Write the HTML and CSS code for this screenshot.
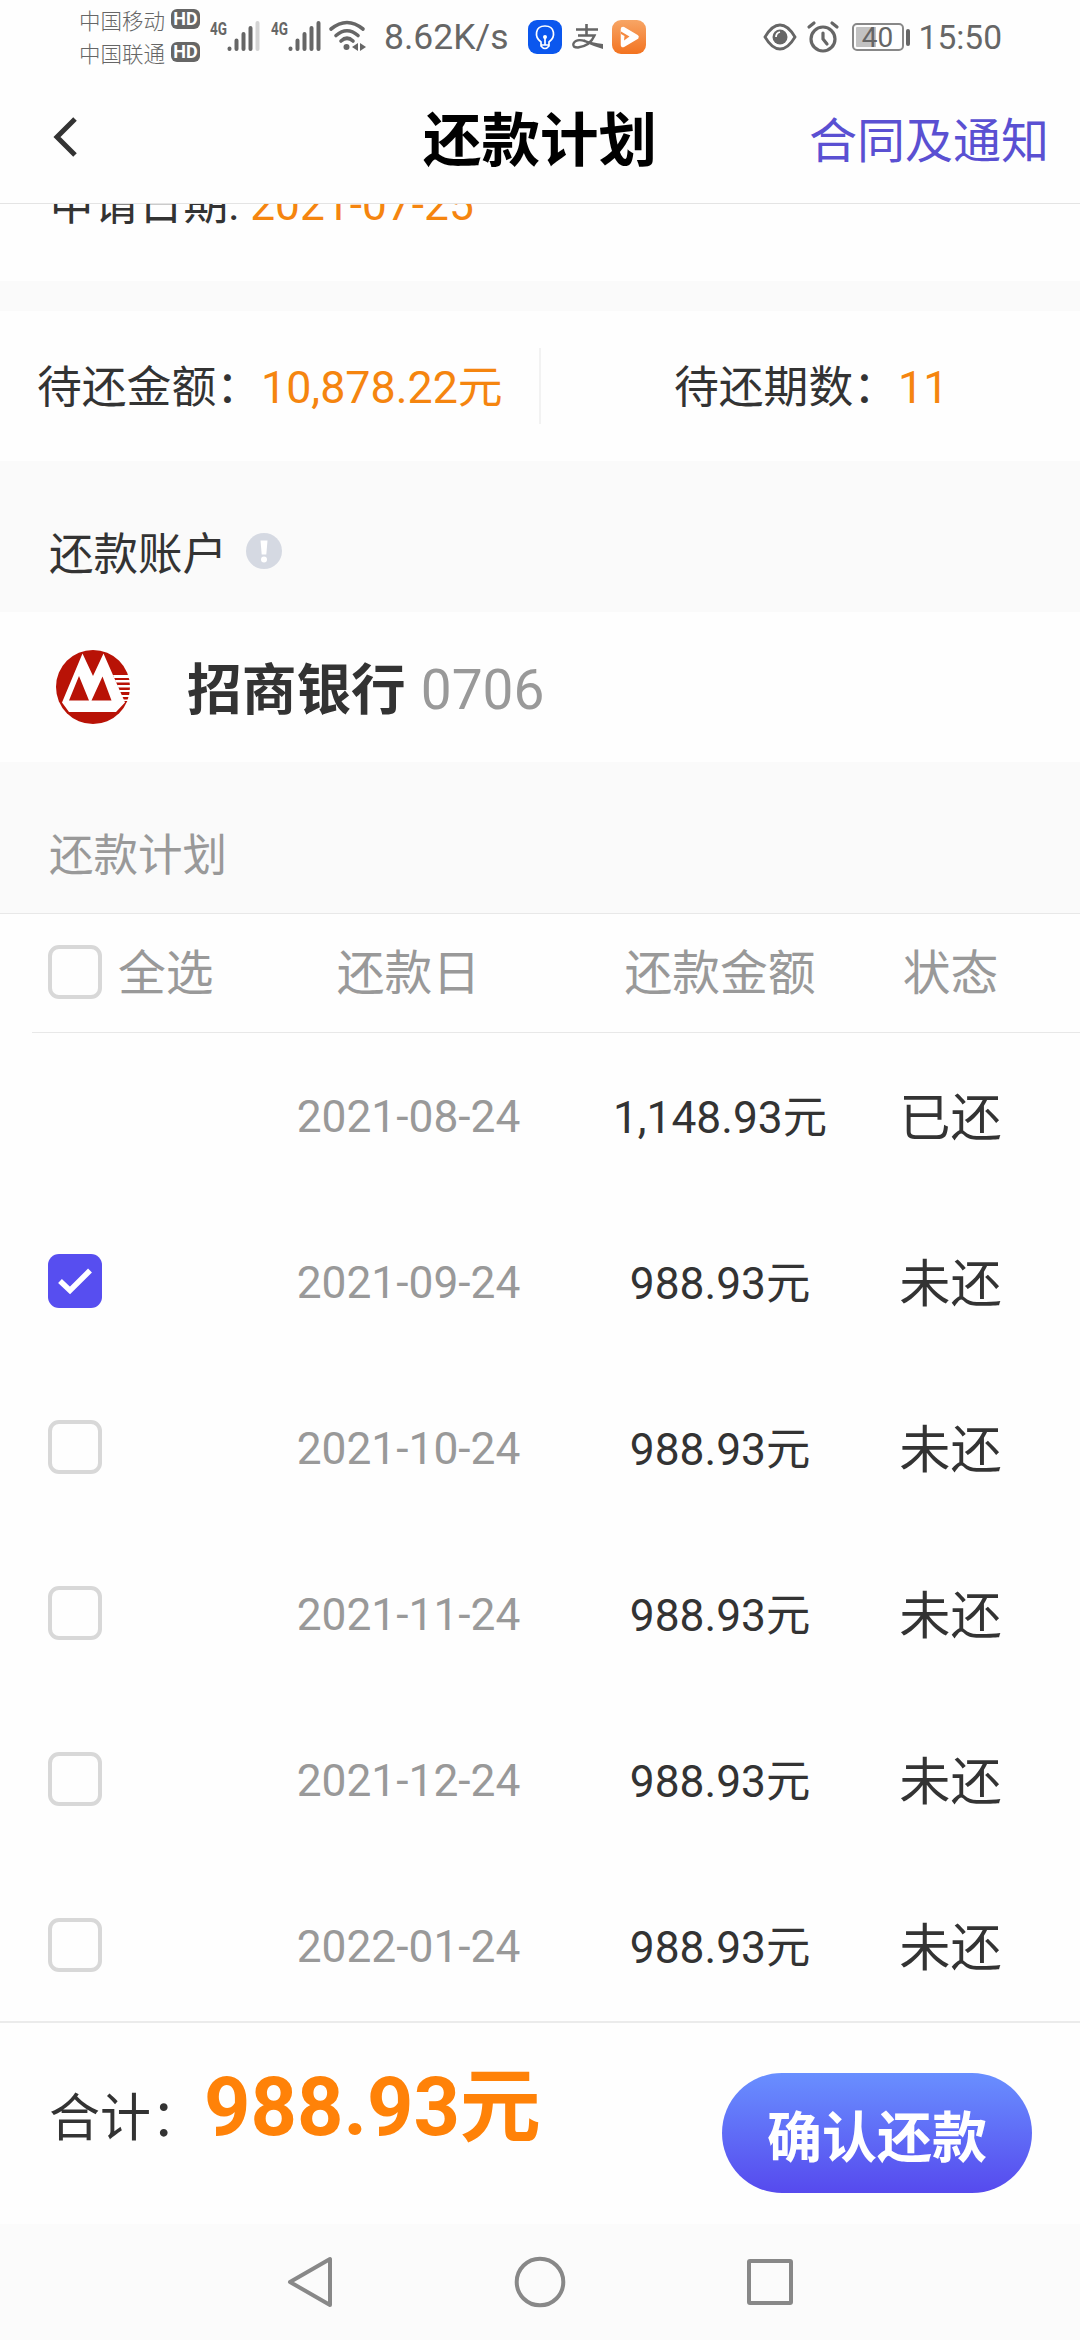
FILE: index.html
```html
<!DOCTYPE html>
<html lang="zh-CN">
<head>
<meta charset="utf-8">
<title>还款计划</title>
<link rel="stylesheet" href="styles.css">
</head>
<body>
<div class="screen">
  <div class="status-bar">
    <div class="carriers">
      <div class="carrier"><span>中国移动</span><span class="hd">HD</span></div>
      <div class="carrier"><span>中国联通</span><span class="hd">HD</span></div>
    </div>
    <svg class="signal" width="50" height="36" viewBox="0 0 50 36">
      <text x="0" y="16" class="net" textLength="17" lengthAdjust="spacingAndGlyphs">4G</text>
      <g stroke="#666" stroke-width="4" stroke-linecap="round"><path d="M19.500 30V29.500M26.500 30V21.500M33.500 30V15M40.500 30V9"/><path d="M47.500 30V4" stroke="#d4d4d4"/></g>
    </svg>
    <svg class="signal second" width="50" height="36" viewBox="0 0 50 36">
      <text x="0" y="16" class="net" textLength="17" lengthAdjust="spacingAndGlyphs">4G</text>
      <g stroke="#666" stroke-width="4" stroke-linecap="round"><path d="M19.500 30V29.500M26.500 30V21.500M33.500 30V15M40.500 30V9M47.500 30V4"/></g>
    </svg>
    <svg class="wifi" width="38" height="34" viewBox="0 0 38 34">
      <g fill="none" stroke="#666" stroke-width="3.600" stroke-linecap="round"><path d="M2 9Q18-4 34 9"/><path d="M7 15.500Q18 6 29 15.500"/><path d="M12 21Q18 15.500 24 21"/></g>
      <circle cx="17.500" cy="27" r="3" fill="#666"/><path d="M29 23v8l-6-4zM31 23v8l6-4z" fill="#666"/>
    </svg>
    <span class="speed">8.62K/s</span>
    <svg class="app-blue" width="34" height="34" viewBox="0 0 34 34"><rect width="34" height="34" rx="9" fill="#0b57ee"/><path d="M13 26v-4C6 17 7 6 17 6S28 17 21 22v4q-4 5-8 0zM17 25v-8M13 25h8" fill="none" stroke="#fff" stroke-width="1.700"/><circle cx="17" cy="17" r="2" fill="#fff"/></svg>
    <svg class="alipay" width="32" height="26" viewBox="0 0 32 26"><g fill="none" stroke="#666"><path d="M4 5.500h22M14.500 0v11" stroke-width="2.600"/><path d="M6 11.500h16.500Q18 22 6 23.500Q0 23.500 1.500 19.500Q4 14.500 13 17" stroke-width="2.400"/></g><path d="M12 15.500Q20 18.500 31 20v5Q21 22 12 18z" fill="#666"/></svg>
    <svg class="app-orange" width="34" height="34" viewBox="0 0 34 34"><defs><linearGradient id="orange" x2="0" y2="1"><stop stop-color="#f7a565"/><stop offset="1" stop-color="#f37320"/></linearGradient></defs><rect width="34" height="34" rx="9" fill="url(#orange)"/><path d="M11 9L24.500 17 11 25z" fill="#fff" stroke="#fff" stroke-width="4.500" stroke-linejoin="round"/><path d="M9 11.500l8.500 5L12 20.500 12.500 16 9 14z" fill="#f58a40"/></svg>
    <div class="status-right">
      <svg width="34" height="28" viewBox="0 0 34 28"><path d="M2 14Q9 2 17 2t15 12Q25 26 17 26T2 14z" fill="none" stroke="#666" stroke-width="2.800"/><circle cx="17" cy="14" r="7.500" fill="#666"/><path d="M17 9q-4 1-4 5" fill="none" stroke="#fff" stroke-width="1.800"/></svg>
      <svg class="alarm" width="32" height="32" viewBox="0 0 32 32"><g fill="none" stroke="#666" stroke-width="3.200" stroke-linecap="round"><circle cx="16" cy="18" r="12"/><path d="M16 12v6l4 5M2 6l5-4M30 6l-5-4"/></g></svg>
      <div class="battery"><span>40</span></div><i class="nub"></i>
      <span class="clock">15:50</span>
    </div>
  </div>

  <header class="nav-bar">
    <svg width="26" height="42" viewBox="0 0 26 42"><path d="M23 3L5 21l18 18" fill="none" stroke="#333" stroke-width="5"/></svg>
    <h1>还款计划</h1>
    <a>合同及通知</a>
  </header>

  <main class="content">
    <section class="apply"><p>申请日期: <span class="orange">2021-07-25</span></p></section>
    <section class="summary">
      <div class="sum-left">待还金额：<span class="orange">10,878.22元</span></div>
      <div class="sum-right">待还期数：<span class="orange">11</span></div>
    </section>
    <h2 class="section-title">还款账户
      <svg width="36" height="36" viewBox="0 0 36 36"><circle cx="18" cy="18" r="18" fill="#d5d9e2"/><path d="M14.500 7.500h7l-1.200 14h-4.600z" fill="#fff"/><circle cx="18" cy="26.500" r="3" fill="#fff"/></svg>
    </h2>
    <section class="account">
      <svg width="76" height="76" viewBox="0 0 76 76">
        <circle cx="38" cy="38" r="37" fill="#b81206"/>
        <path d="M27.500 4.500L38 27 48.500 4.500 70 53.500 61 63H14L7 53.500zM24 27L14 51.500h20zM47.500 27.500L36.500 51.500h20z" fill="#fff" fill-rule="evenodd"/>
        <path d="M58 26h18v3H59zM60 31h16v2.500H61zM62 36h14v2.500H63zM64 41h12v2H65zM66 46h10v2H67zM67 50.500h9v1.500h-8z" fill="#fff"/>
      </svg>
      <strong>招商银行</strong><span>0706</span>
    </section>
    <h2 class="section-title muted">还款计划</h2>
    <section class="plan">
      <div class="row head"><div class="pick"><i class="box"></i><span>全选</span></div><span>还款日</span><span>还款金额</span><span>状态</span></div>
      <div class="row"><div class="pick"></div><time>2021-08-24</time><b>1,148.93元</b><em>已还</em></div>
      <div class="row"><div class="pick"><i class="box checked"><svg width="54" height="54" viewBox="0 0 54 54"><path d="M12 27l10 9.500 20-20" fill="none" stroke="#fff" stroke-width="5.500"/></svg></i></div><time>2021-09-24</time><b>988.93元</b><em>未还</em></div>
      <div class="row"><div class="pick"><i class="box"></i></div><time>2021-10-24</time><b>988.93元</b><em>未还</em></div>
      <div class="row"><div class="pick"><i class="box"></i></div><time>2021-11-24</time><b>988.93元</b><em>未还</em></div>
      <div class="row"><div class="pick"><i class="box"></i></div><time>2021-12-24</time><b>988.93元</b><em>未还</em></div>
      <div class="row"><div class="pick"><i class="box"></i></div><time>2022-01-24</time><b>988.93元</b><em>未还</em></div>
    </section>
  </main>

  <footer class="pay-bar">
    <span class="total-label">合计：</span><strong class="total">988.93元</strong>
    <button>确认还款</button>
  </footer>
  <nav class="system-nav">
    <svg width="50" height="54" viewBox="0 0 50 54"><path d="M45 4v46L5 27z" fill="none" stroke="#888" stroke-width="4" stroke-linejoin="round"/></svg>
    <svg width="54" height="54" viewBox="0 0 54 54"><circle cx="27" cy="27" r="23.300" fill="none" stroke="#888" stroke-width="4"/></svg>
    <svg width="50" height="54" viewBox="0 0 50 54"><rect x="4" y="6" width="42" height="42" rx="1" fill="none" stroke="#888" stroke-width="4"/></svg>
  </nav>
</div>
</body>
</html>
```

FILE: styles.css
```css
* { box-sizing: border-box; margin: 0; }
body { background: #fff; color: #333; font-family: Roboto, "Noto Sans CJK SC", sans-serif; font-size: 44.800px; }
svg { display: block; flex: none; overflow: visible; }
i, em { font-style: normal; }
.screen { width: 1080px; height: 2340px; display: flex; flex-direction: column; overflow: hidden; background: #fefefe; }
.orange { color: #f5850f; }

.status-bar { height: 74px; display: flex; align-items: center; padding: 0 78px 0 79px; color: #666; flex: none; white-space: nowrap; }
.carriers { width: 131px; display: grid; margin-bottom: 3px; }
.carrier { height: 33px; display: flex; align-items: center; gap: 6px; font-size: 21.500px; font-weight: 300; }
.hd { width: 29px; height: 20px; border-radius: 6px; background: #666; color: #fff; font-weight: 700; font-size: 18px; line-height: 20px; text-align: center; }
.net { font: 700 19px Roboto, sans-serif; fill: #666; }
.second { margin-left: 11px; }
.wifi { margin-left: 8px; }
.speed { font-size: 35.500px; width: 144px; margin-left: 17px; }
.alipay { margin: 0 8px 0 10px; }
.status-right { margin-left: auto; display: flex; align-items: center; }
.alarm { margin: 0 13px 0 10px; }
.battery { width: 52px; height: 28px; border: 2px solid #888; border-radius: 5px; background: linear-gradient(90deg, #c2c2c2 20px, #fff 20px) content-box; padding: 2px; font-size: 28px; line-height: 21px; text-align: center; }
.nub { width: 4px; height: 17px; border-radius: 2px; background: #666; margin: 0 9px 0 2px; }
.clock { font-size: 33.500px; }

.nav-bar { height: 130px; display: grid; grid-template-columns: minmax(0, 1fr) auto minmax(0, 1fr); align-items: center; padding: 0 31px; border-bottom: 1px solid #e4e4e4; flex: none; }
.nav-bar svg { margin: 0 0 3px 21px; }
.nav-bar h1 { font-size: 58.500px; line-height: 80px; color: #000; font-weight: 700; padding-top: 5px; }
.nav-bar a { justify-self: end; font-size: 48px; color: #5a50d2; white-space: nowrap; padding-bottom: 4px; }

.content { height: 1817px; overflow: hidden; background: #fafafa; flex: none; }
.apply { height: 77px; padding-left: 49px; }
.apply p { line-height: 60px; margin-top: -29px; }
.apply .orange { font-size: 44.300px; }
.apply, .summary, .account, .plan { display: flow-root; background: #fefefe; }
.summary { display: flex; align-items: center; margin-top: 30px; height: 150px; }
.sum-left, .sum-right { height: 76px; line-height: 80px; white-space: nowrap; }
.sum-left { width: 541px; padding-left: 37px; border-right: 2px solid #f2f2f2; }
.sum-right { padding-left: 133px; }
.section-title { height: 151px; display: flex; align-items: center; gap: 19px; padding: 28px 0 0 49px; font-size: 44.500px; font-weight: 400; }
.muted { color: #999; }
.account { display: flex; align-items: center; height: 150px; padding-left: 55px; }
.account strong { margin: 0 15px 3px 56px; font-size: 54.700px; }
.account span { font-size: 55px; color: #999; padding-top: 6px; }

.row { display: grid; grid-template-columns: 238px 341px 282px 179px; align-items: center; height: 166px; padding-bottom: 3px; text-align: center; }
.head { height: 120px; padding-bottom: 4px; border-top: 1px solid #e8e8e8; color: #999; font-size: 47.800px; background: linear-gradient(#e8e8e8, #e8e8e8) 32px 100% / 100% 1px no-repeat; }
.pick { display: flex; align-items: center; gap: 16px; padding-left: 48px; white-space: nowrap; }
.head span { line-height: 60px; padding-top: 5px; }
.box { width: 54px; height: 54px; border: 4px solid #d8d8d8; border-radius: 11px; flex: none; }
.checked { border: 0; background: #574ef0; }
.row time { color: #999; font-size: 44.300px; padding-top: 4px; }
.row b { font-weight: 400; font-size: 44.300px; padding-bottom: 2px; }
.row em { font-size: 51.200px; padding-bottom: 1px; }

.pay-bar { height: 203px; border-top: 2px solid #ebebeb; display: flex; align-items: center; padding: 0 48px 0 49px; flex: none; white-space: nowrap; }
.total-label { font-size: 51px; margin-bottom: 20px; }
.total { font-size: 81px; color: #ff8208; margin: 0 0 31px 2px; line-height: 110px; }
.pay-bar button { margin: 18px 0 0 auto; width: 310px; height: 120px; border: 0; border-radius: 60px; background: linear-gradient(#698fff, #564aee); color: #fff; font: 700 55px Roboto, "Noto Sans CJK SC", sans-serif; }
.system-nav { flex: 1; display: flex; background: #fbfbfb; padding: 0 285px 0 285px; justify-content: space-between; align-items: center; }
```
